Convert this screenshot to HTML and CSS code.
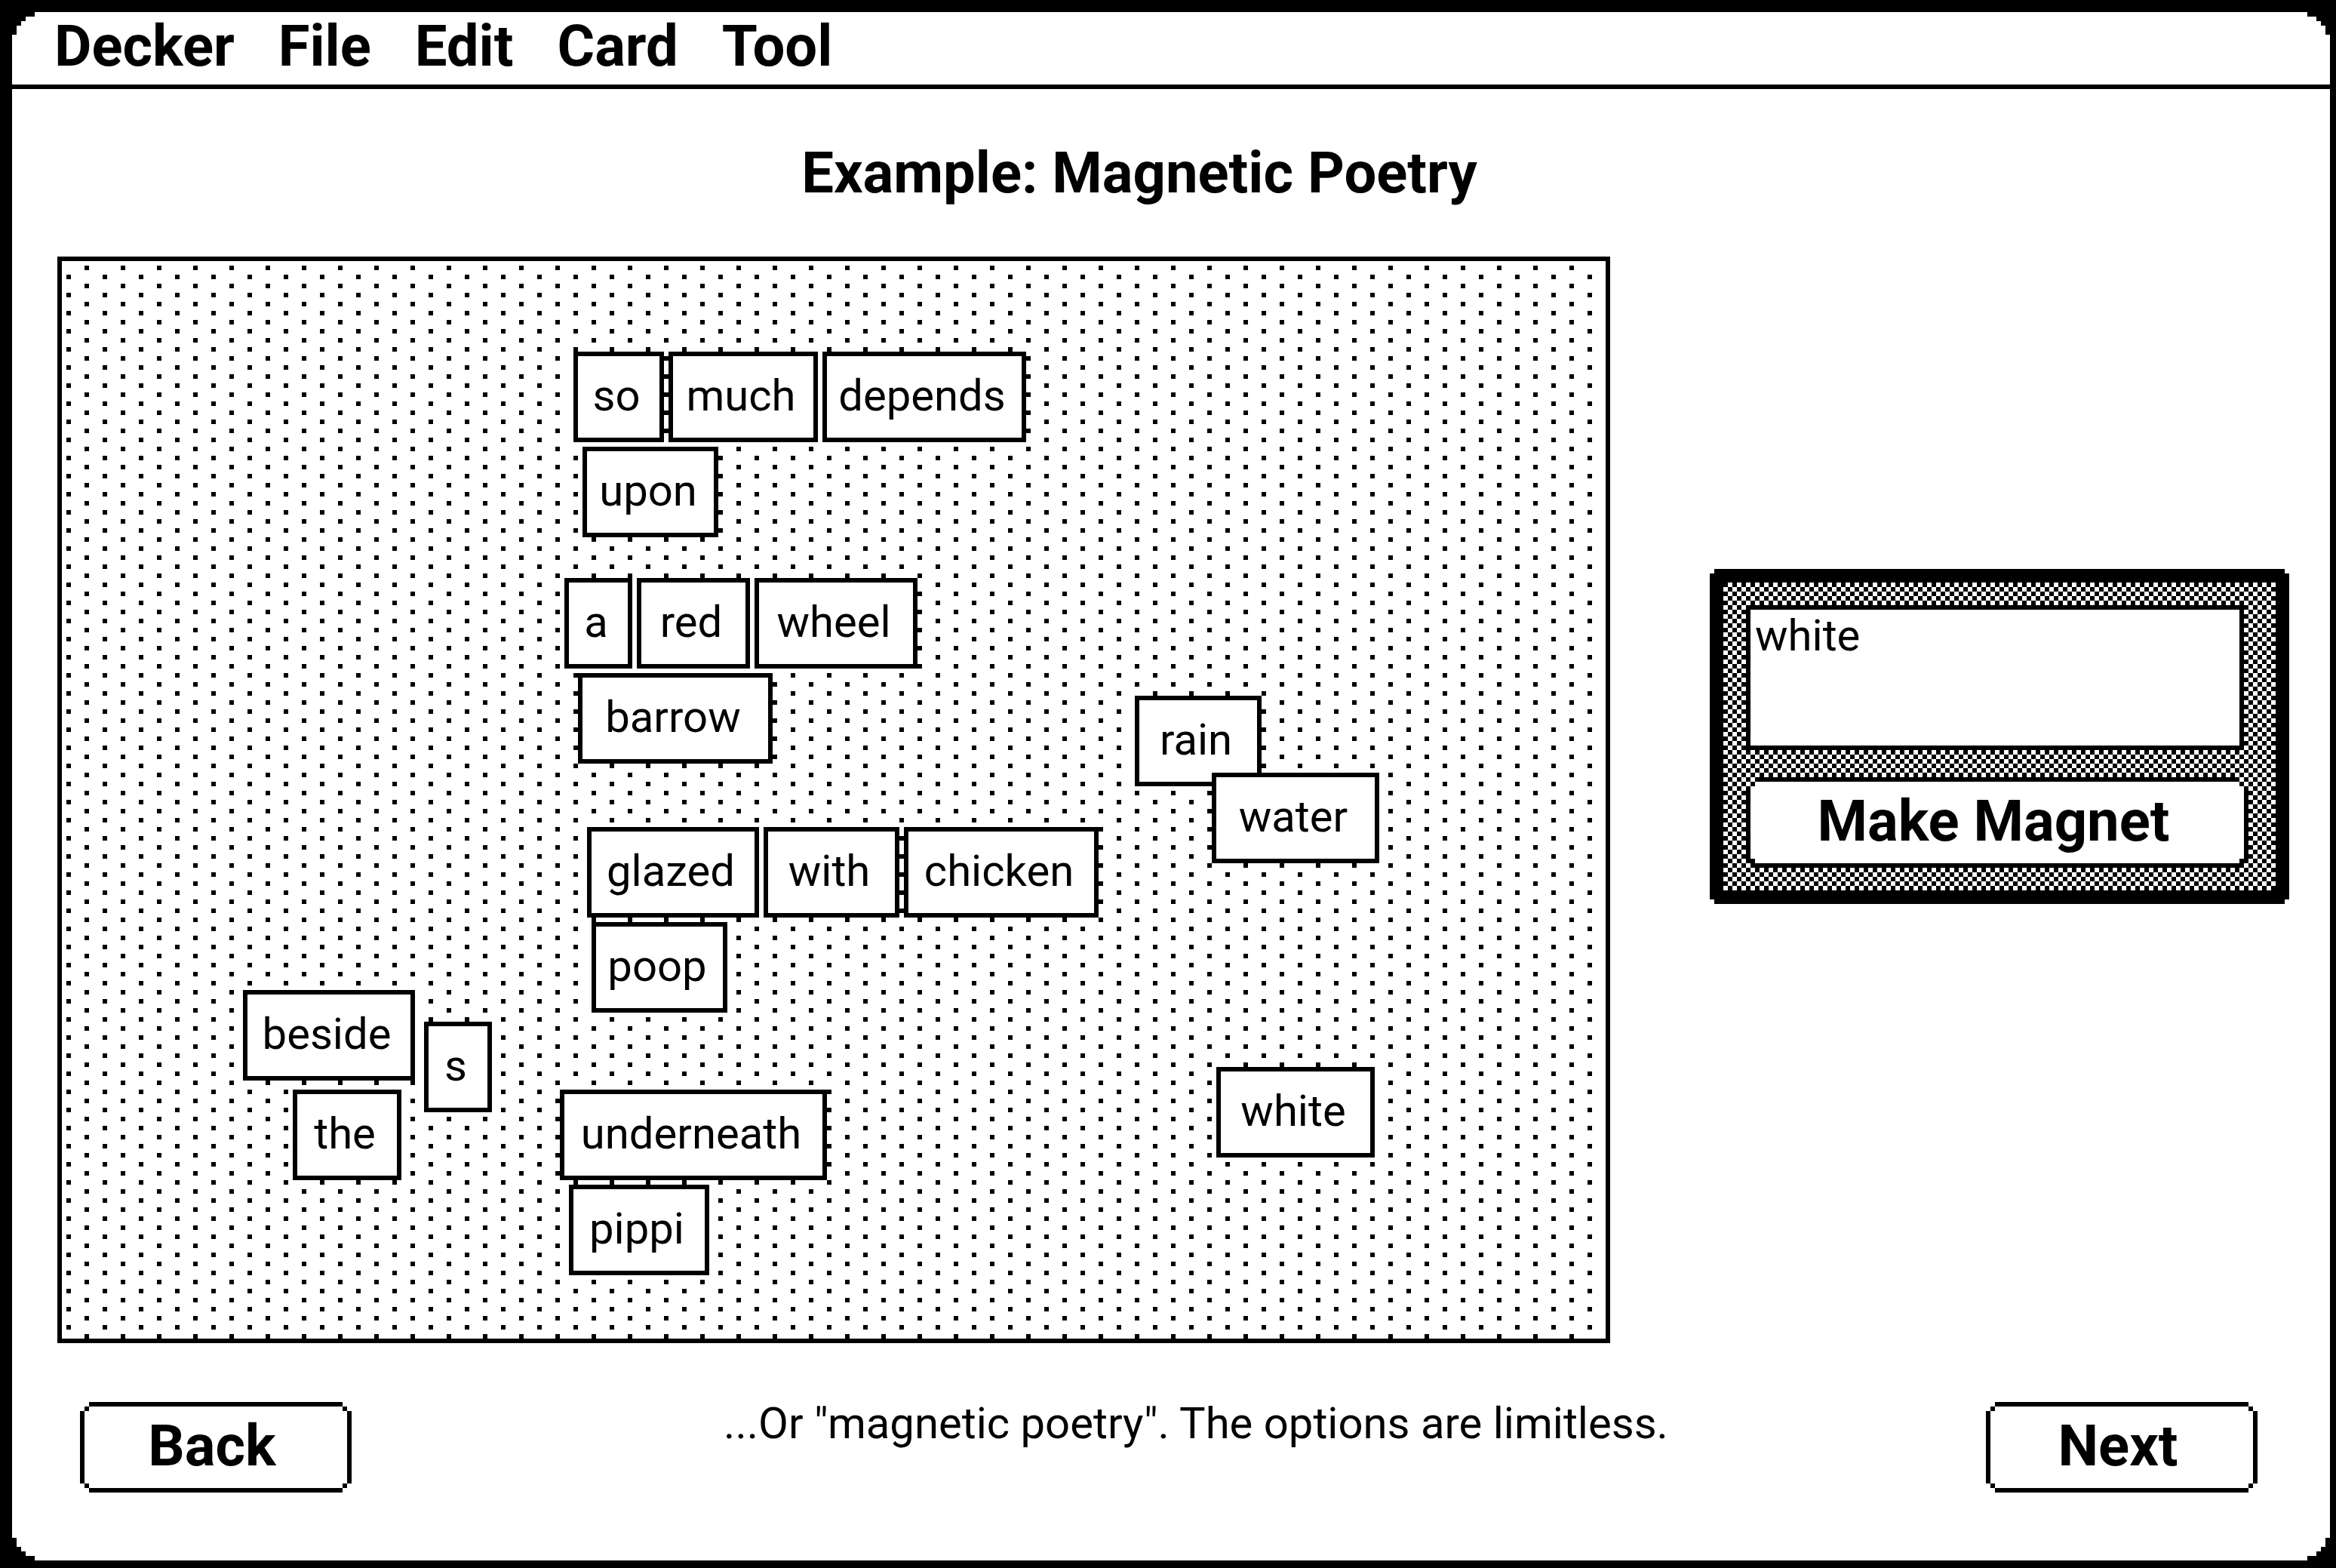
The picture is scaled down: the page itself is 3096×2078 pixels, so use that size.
FILE: index.html
```html
<!DOCTYPE html>
<html lang="en">
<head>
<meta charset="utf-8">
<title>Decker</title>
<link rel="stylesheet" href="styles.css">
</head>
<body>
<div class="screen">
  <nav class="menubar">
    <button class="menu" type="button">Decker</button>
    <button class="menu" type="button">File</button>
    <button class="menu" type="button">Edit</button>
    <button class="menu" type="button">Card</button>
    <button class="menu" type="button">Tool</button>
  </nav>
  <main class="card">
    <h1 class="title">Example: Magnetic Poetry</h1>
    <div class="stage">
      <div class="board">
        <div class="magnet" style="--x:113;--y:20;--w:20">so</div>
        <div class="magnet" style="--x:134;--y:20;--w:33">much</div>
        <div class="magnet" style="--x:168;--y:20;--w:45">depends</div>
        <div class="magnet" style="--x:115;--y:41;--w:30">upon</div>
        <div class="magnet" style="--x:111;--y:70;--w:15">a</div>
        <div class="magnet" style="--x:127;--y:70;--w:25">red</div>
        <div class="magnet" style="--x:153;--y:70;--w:36">wheel</div>
        <div class="magnet" style="--x:114;--y:91;--w:43">barrow</div>
        <div class="magnet" style="--x:237;--y:96;--w:28">rain</div>
        <div class="magnet" style="--x:254;--y:113;--w:37">water</div>
        <div class="magnet" style="--x:116;--y:125;--w:38">glazed</div>
        <div class="magnet" style="--x:155;--y:125;--w:30">with</div>
        <div class="magnet" style="--x:186;--y:125;--w:43">chicken</div>
        <div class="magnet" style="--x:117;--y:146;--w:30">poop</div>
        <div class="magnet" style="--x:40;--y:161;--w:38">beside</div>
        <div class="magnet" style="--x:80;--y:168;--w:15">s</div>
        <div class="magnet" style="--x:51;--y:183;--w:24">the</div>
        <div class="magnet" style="--x:110;--y:183;--w:59">underneath</div>
        <div class="magnet" style="--x:112;--y:204;--w:31">pippi</div>
        <div class="magnet" style="--x:255;--y:178;--w:35">white</div>
      </div>
      <form class="maker">
        <textarea class="word" aria-label="Magnet text" spellcheck="false">white</textarea>
        <button class="button" type="button">Make Magnet</button>
      </form>
    </div>
    <footer class="footer">
      <button class="button nav" type="button">Back</button>
      <p class="caption">...Or "magnetic poetry". The options are limitless.</p>
      <button class="button nav" type="button">Next</button>
    </footer>
  </main>
</div>
</body>
</html>
```
FILE: styles.css
```css
:root {
  --px: 6px;
  --ink: #000;
  --paper: #fff;
}

* {
  box-sizing: border-box;
}

body {
  margin: 0;
  padding: 16px 8px 10px 16px;
  min-height: 100vh;
  display: flex;
  background: var(--ink);
  color: var(--ink);
  font: 58px/60px Roboto, "Liberation Sans", sans-serif;
}

/* stepped corners, in 6px cells */
.screen {
  flex: 1;
  min-width: 0;
  display: flex;
  flex-direction: column;
  background: var(--paper);
  clip-path: polygon(
    0 30px, 6px 30px, 6px 18px, 12px 18px, 12px 12px, 18px 12px, 18px 6px, 30px 6px, 30px 0,
    calc(100% - 30px) 0, calc(100% - 30px) 6px, calc(100% - 18px) 6px, calc(100% - 18px) 12px,
    calc(100% - 12px) 12px, calc(100% - 12px) 18px, calc(100% - 6px) 18px, calc(100% - 6px) 30px, 100% 30px,
    100% calc(100% - 30px), calc(100% - 6px) calc(100% - 30px), calc(100% - 6px) calc(100% - 18px),
    calc(100% - 12px) calc(100% - 18px), calc(100% - 12px) calc(100% - 12px),
    calc(100% - 18px) calc(100% - 12px), calc(100% - 18px) calc(100% - 6px),
    calc(100% - 30px) calc(100% - 6px), calc(100% - 30px) 100%,
    30px 100%, 30px calc(100% - 6px), 18px calc(100% - 6px), 18px calc(100% - 12px),
    12px calc(100% - 12px), 12px calc(100% - 18px), 6px calc(100% - 18px), 6px calc(100% - 30px), 0 calc(100% - 30px)
  );
}

.menubar {
  display: flex;
  align-items: flex-start;
  gap: 58px;
  height: 102px;
  padding: 0 56px;
  border-bottom: 6px solid var(--ink);
}

.menu {
  padding: 0;
  border: 0;
  background: none;
  color: inherit;
  font: bold 76px/90px Roboto, "Liberation Sans", sans-serif;
}

.card {
  flex: 1;
  display: flex;
  flex-direction: column;
  padding: 66px 54px 90px 60px;
}

.title {
  margin: 0 90px 66px 0;
  text-align: center;
  font: bold 76px/90px Roboto, "Liberation Sans", sans-serif;
}

.stage {
  flex: 1;
  display: flex;
  align-items: flex-start;
  gap: 132px;
}

.board {
  position: relative;
  flex: 1;
  align-self: stretch;
  min-height: 1440px;
  border: 6px solid var(--ink);
  background:
    conic-gradient(at 6px 6px, transparent 75%, var(--ink) 0) 30px 6px / 48px 24px,
    conic-gradient(at 6px 6px, transparent 75%, var(--ink) 0) 6px 18px / 48px 24px;
}

.magnet {
  position: absolute;
  left: calc(var(--x) * var(--px));
  top: calc(var(--y) * var(--px));
  width: calc(var(--w) * var(--px));
  height: 120px;
  padding-right: 6px;
  border: 6px solid var(--ink);
  background: var(--paper);
  line-height: 104px;
  text-align: center;
  white-space: nowrap;
}

.maker {
  width: 768px;
  margin-top: 414px;
  display: flex;
  flex-direction: column;
  gap: 36px;
  padding: 30px 36px 30px 30px;
  border: 18px solid var(--ink);
  background: repeating-conic-gradient(var(--paper) 0 25%, var(--ink) 0 50%) 0 0 / 12px 12px;
  clip-path: polygon(
    0 6px, 6px 6px, 6px 0, calc(100% - 6px) 0, calc(100% - 6px) 6px, 100% 6px,
    100% calc(100% - 6px), calc(100% - 6px) calc(100% - 6px), calc(100% - 6px) 100%,
    6px 100%, 6px calc(100% - 6px), 0 calc(100% - 6px)
  );
}

.word {
  display: block;
  height: 192px;
  margin: 0 6px 0 0;
  padding: 4px 6px;
  border: 6px solid var(--ink);
  border-radius: 0;
  outline: 0;
  resize: none;
  background: var(--paper);
  color: inherit;
  font: inherit;
}

.button {
  position: relative;
  z-index: 0;
  height: 120px;
  padding: 0 10px 4px 0;
  border: 0;
  background: var(--ink);
  color: var(--ink);
  font: bold 76px/112px Roboto, "Liberation Sans", sans-serif;
  clip-path: polygon(
    0 12px, 6px 12px, 6px 6px, 12px 6px, 12px 0,
    calc(100% - 12px) 0, calc(100% - 12px) 6px, calc(100% - 6px) 6px, calc(100% - 6px) 12px, 100% 12px,
    100% calc(100% - 12px), calc(100% - 6px) calc(100% - 12px), calc(100% - 6px) calc(100% - 6px),
    calc(100% - 12px) calc(100% - 6px), calc(100% - 12px) 100%,
    12px 100%, 12px calc(100% - 6px), 6px calc(100% - 6px), 6px calc(100% - 12px), 0 calc(100% - 12px)
  );
}

.button::before {
  content: "";
  position: absolute;
  z-index: -1;
  inset: 6px;
  background: var(--paper);
  clip-path: polygon(
    0 6px, 6px 6px, 6px 0, calc(100% - 6px) 0, calc(100% - 6px) 6px, 100% 6px,
    100% calc(100% - 6px), calc(100% - 6px) calc(100% - 6px), calc(100% - 6px) 100%,
    6px 100%, 6px calc(100% - 6px), 0 calc(100% - 6px)
  );
}

.footer {
  display: flex;
  align-items: flex-start;
  justify-content: space-between;
  padding: 78px 42px 0 30px;
}

.nav {
  width: 360px;
}

.caption {
  flex: 1;
  margin: 0;
  padding-left: 72px;
  line-height: 56px;
  text-align: center;
}
```
